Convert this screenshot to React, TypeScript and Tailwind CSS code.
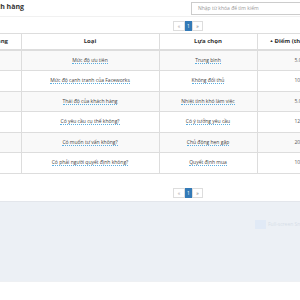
const rows = [
  { loai: "Mức độ ưu tiên", chon: "Trung bình", diem: "5.00" },
  { loai: "Mức độ cạnh tranh của Faceworks", chon: "Không đối thủ", diem: "10.00" },
  { loai: "Thái độ của khách hàng", chon: "Nhiệt tình khó làm việc", diem: "5.00" },
  { loai: "Có yêu cầu cụ thể không?", chon: "Có ý tưởng yêu cầu", diem: "12.00" },
  { loai: "Có muốn tư vấn không?", chon: "Chủ động hẹn gặp", diem: "20.00" },
  { loai: "Có phải người quyết định không?", chon: "Quyết định mua", diem: "10.00" },
];

const heights = ["h-[21px]", "h-[21px]", "h-[20px]", "h-[21px]", "h-[20px]", "h-[21px]"];

function Pager() {
  return (
    <div className="flex pl-[173px] h-[10px] text-[5px] leading-none">
      <span className="w-[12px] border border-[#ddd] text-[#999] flex items-center justify-center">«</span>
      <span className="w-[7px] bg-[#337ab7] border border-[#337ab7] text-white flex items-center justify-center">1</span>
      <span className="w-[11px] border border-[#ddd] text-[#666] flex items-center justify-center">»</span>
    </div>
  );
}

function Editable({ children }: { children: string }) {
  return (
    <span className="border-b border-dotted border-[#5aaee0] text-[#444]">{children}</span>
  );
}

export default function App() {
  return (
    <div className="w-[300px] h-[300px] overflow-hidden bg-white font-['Open_Sans',sans-serif] flex flex-col">
      <div className="h-[17px] shrink-0 border-b border-[#f1f1f1] flex items-start">
        <div className="w-[24px] shrink-0 flex justify-end whitespace-nowrap pt-[2px]">
          <span className="text-[7px] font-bold text-[#333] leading-[9px]">Danh sách khách hàng</span>
        </div>
        <div className="ml-[167px] mt-[2px] w-[130px] h-[13px] shrink-0 border border-[#ccc] flex items-center pl-[6px] text-[5px] text-[#999] whitespace-nowrap">
          Nhập từ khóa để tìm kiếm
        </div>
      </div>

      <div className="mt-[4px]">
        <Pager />
      </div>

      <table className="mt-[2px] border-collapse table-fixed text-[5px] text-[#333] w-[345px]">
        <colgroup>
          <col className="w-[21px]" />
          <col className="w-[138px]" />
          <col className="w-[98px]" />
          <col className="w-[88px]" />
        </colgroup>
        <thead>
          <tr className="h-[16px] font-bold text-[6px]">
            <th className="border-t border-b-2 border-r border-[#ddd] p-0 overflow-hidden">
              <div className="w-[8px] flex justify-end whitespace-nowrap">Khách hàng</div>
            </th>
            <th className="border-t border-b-2 border-r border-[#ddd] p-0 text-center">Loại</th>
            <th className="border-t border-b-2 border-r border-[#ddd] p-0 text-center">Lựa chọn</th>
            <th className="border-t border-b-2 border-[#ddd] p-0 text-left pl-[12px] whitespace-nowrap">
              <span className="text-[4px] align-middle mr-[1px]">▲</span>Điểm (thang)
            </th>
          </tr>
        </thead>
        <tbody>
          {rows.map((r, i) => (
            <tr key={i} className={`${heights[i]} ${i % 2 === 0 ? "bg-[#f9f9f9]" : "bg-white"}`}>
              <td className="border-b border-r border-[#ddd] p-0"></td>
              <td className="border-b border-r border-[#ddd] p-0 text-center whitespace-nowrap">
                <Editable>{r.loai}</Editable>
              </td>
              <td className="border-b border-r border-[#ddd] p-0 text-center whitespace-nowrap">
                <Editable>{r.chon}</Editable>
              </td>
              <td className="border-b border-[#ddd] p-0 text-left pl-[37px] text-[#555]">{r.diem}</td>
            </tr>
          ))}
        </tbody>
      </table>

      <div className="mt-[14px]">
        <Pager />
      </div>

      <div className="mt-[3px] h-[80px] shrink-0 bg-[#ecf0f5] border-t border-[#e3e6eb] relative">
        <div className="absolute left-[255px] top-[18px] flex items-center gap-[2px] opacity-60">
          <span className="w-[11px] h-[9px] bg-[#dbe7f7]"></span>
          <span className="text-[5px] text-[#c9d3e0] whitespace-nowrap">Full-screen Snap</span>
        </div>
      </div>
      <div className="flex-1 bg-white border-t border-[#eef0f3]"></div>
    </div>
  );
}
